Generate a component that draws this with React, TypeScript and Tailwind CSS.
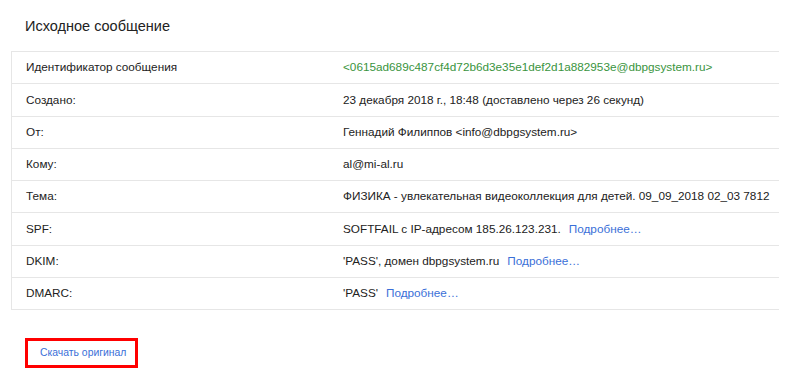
import React from "react";

const F = { fontFamily: '"Liberation Sans", Arial, sans-serif' };

function Link({ children }: { children: React.ReactNode }) {
  return <span className="text-[#3a6fd8]">{children}</span>;
}

const rows: { label: string; value: React.ReactNode }[] = [
  {
    label: "Идентификатор сообщения",
    value: (
      <span className="text-[#3a9440]">
        &lt;0615ad689c487cf4d72b6d3e35e1def2d1a882953e@dbpgsystem.ru&gt;
      </span>
    ),
  },
  { label: "Создано:", value: "23 декабря 2018 г., 18:48 (доставлено через 26 секунд)" },
  { label: "От:", value: "Геннадий Филиппов <info@dbpgsystem.ru>" },
  { label: "Кому:", value: "al@mi-al.ru" },
  { label: "Тема:", value: "ФИЗИКА - увлекательная видеоколлекция для детей. 09_09_2018 02_03 7812" },
  {
    label: "SPF:",
    value: (
      <>
        SOFTFAIL с IP-адресом 185.26.123.231.<span className="ml-[8px]"><Link>Подробнее…</Link></span>
      </>
    ),
  },
  {
    label: "DKIM:",
    value: (
      <>
        'PASS', домен dbpgsystem.ru<span className="ml-[8px]"><Link>Подробнее…</Link></span>
      </>
    ),
  },
  {
    label: "DMARC:",
    value: (
      <>
        'PASS'<span className="ml-[8px]"><Link>Подробнее…</Link></span>
      </>
    ),
  },
];

export default function App() {
  return (
    <div className="w-[798px] h-[388px] bg-white overflow-hidden" style={F}>
      <div className="pl-[25px] pt-[16px] h-[51px] text-[14.5px] text-[#222]">Исходное сообщение</div>
      <div className="ml-[11px] w-[768px] border-l border-t border-[#e6e6e6]">
        {rows.map((r, i) => (
          <div
            key={i}
            className="flex items-center h-[32.25px] pb-[1px] border-b border-[#e6e6e6] text-[11.75px] text-[#222]"
          >
            <div className="w-[331px] pl-[14px] shrink-0">{r.label}</div>
            <div className="whitespace-nowrap">{r.value}</div>
          </div>
        ))}
      </div>
      <div className="pl-[25px] pt-[28px]">
        <div className="flex items-center w-[113px] h-[30px] border-[3px] border-[#ff0000] pl-[12px] text-[10.4px] text-[#3a6fd8] whitespace-nowrap">
          Скачать оригинал
        </div>
      </div>
    </div>
  );
}
